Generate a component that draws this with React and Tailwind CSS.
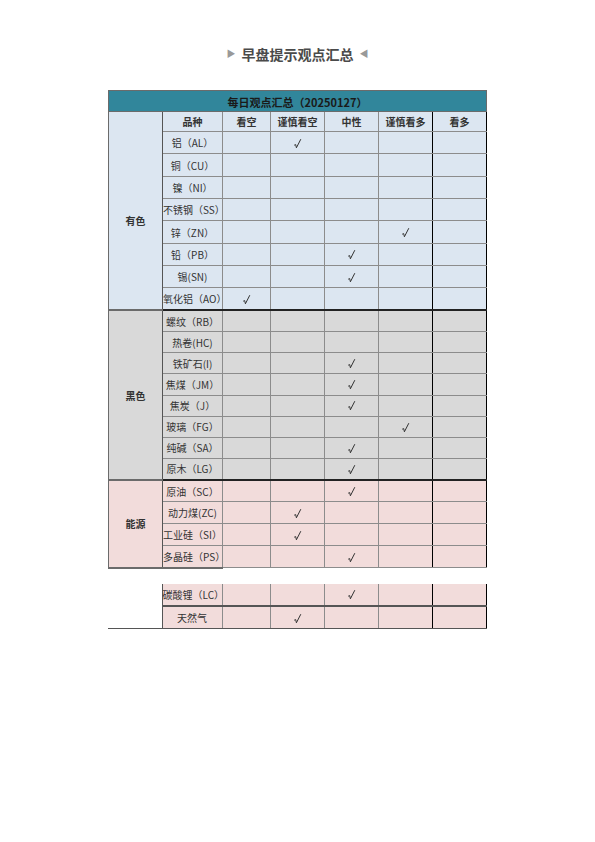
import React from "react";

const cols = ["看空", "谨慎看空", "中性", "谨慎看多", "看多"];

const groups = [
  {
    name: "有色",
    bg: "bg-[#dce6f1]",
    h: "h-[22.35px]",
    rows: [
      ["铝（AL）", 1],
      ["铜（CU）", -1],
      ["镍（NI）", -1],
      ["不锈钢（SS）", -1],
      ["锌（ZN）", 3],
      ["铅（PB）", 2],
      ["锡(SN)", 2],
      ["氧化铝（AO）", 0],
    ],
  },
  {
    name: "黑色",
    bg: "bg-[#d9d9d9]",
    h: "h-[21.2px]",
    rows: [
      ["螺纹（RB）", -1],
      ["热卷(HC)", -1],
      ["铁矿石(I)", 2],
      ["焦煤（JM）", 2],
      ["焦炭（J）", 2],
      ["玻璃（FG）", 3],
      ["纯碱（SA）", 2],
      ["原木（LG）", 2],
    ],
  },
  {
    name: "能源",
    bg: "bg-[#f2dcdb]",
    h: "h-[22px]",
    rows: [
      ["原油（SC）", 2],
      ["动力煤(ZC)", 1],
      ["工业硅（SI）", 1],
      ["多晶硅（PS）", 2],
    ],
  },
];

const extra = [
  ["碳酸锂（LC）", 2],
  ["天然气", 1],
];

const colBorder = [
  "border-r-[#8c8c8c]",
  "border-r-[#8c8c8c]",
  "border-r-[#8c8c8c]",
  "border-r-black",
  "border-r-black",
];

// the "√" mark drawn as a small tick
const Tick = () => (
  <svg width="9" height="11" viewBox="0 0 9 11" className="inline-block align-middle">
    <path d="M1.2 7.2 L2.7 6.6 L3.4 9.8 L7.8 1.2" fill="none" stroke="#333" strokeWidth="1" strokeLinejoin="round" />
  </svg>
);

const ValueCells = ({ pick }) =>
  cols.map((c, i) => (
    <td
      key={c}
      className={`border-b border-b-[#8c8c8c] border-r ${colBorder[i]} text-center leading-none`}
    >
      {pick === i ? <Tick /> : null}
    </td>
  ));

export default function App() {
  return (
    <div
      className="w-[595px] h-[842px] bg-white text-[#333]"
      style={{ fontFamily: '"Noto Sans CJK SC", "Liberation Sans", sans-serif' }}
    >
      <div className="pt-[44px] flex items-center justify-center gap-[6px] text-[#4a4a4a]">
        <span className="text-[9px] text-[#999]">▶</span>
        <span className="text-[14px] font-bold leading-[20px]">早盘提示观点汇总</span>
        <span className="text-[9px] text-[#999]">◀</span>
      </div>

      <div className="ml-[108px] mt-[26px] w-[378px]">
        <table className="w-[378px] table-fixed border-collapse text-[10px]">
          <colgroup>
            <col className="w-[54px]" />
            <col className="w-[60px]" />
            <col className="w-[48px]" />
            <col className="w-[54px]" />
            <col className="w-[54px]" />
            <col className="w-[54px]" />
            <col className="w-[54px]" />
          </colgroup>
          <tbody>
            <tr className="h-[21px] bg-[#31869b]">
              <td
                colSpan={7}
                className="border border-[#6b6b6b] pt-[2px] text-center text-[11px] font-bold text-[#1a1a1a]"
              >
                每日观点汇总（20250127）
              </td>
            </tr>
            <tr className="h-[20px] bg-[#dce6f1]">
              <td className="border-l border-l-[#6b6b6b] border-r border-r-[#555]" />
              <td className="border-b border-b-[#8c8c8c] border-r border-r-[#8c8c8c] text-center font-bold">
                品种
              </td>
              {cols.map((c, i) => (
                <td
                  key={c}
                  className={`border-b border-b-[#8c8c8c] border-r ${colBorder[i]} text-center font-bold`}
                >
                  {c}
                </td>
              ))}
            </tr>
            {groups.map((g, gi) =>
              g.rows.map(([name, pick], ri) => (
                <tr
                  key={name}
                  className={`${g.h} ${g.bg} ${
                    ri === 0 && gi > 0 ? "border-t-2 border-t-[#222]" : ""
                  }`}
                >
                  {ri === 0 && (
                    <td
                      rowSpan={g.rows.length}
                      className="border-l border-l-[#6b6b6b] border-r border-r-[#555] border-b-2 border-b-[#6b6b6b] text-center font-bold"
                    >
                      {g.name}
                    </td>
                  )}
                  <td
                    className={`border-r border-r-[#8c8c8c] text-center ${
                      ri === g.rows.length - 1 && gi === 2
                        ? "border-b-2 border-b-[#6b6b6b]"
                        : "border-b border-b-[#8c8c8c]"
                    }`}
                  >
                    {name}
                  </td>
                  <ValueCells pick={pick} />
                </tr>
              ))
            )}
          </tbody>
        </table>

        <table className="mt-[15px] w-[378px] table-fixed border-collapse text-[10px]">
          <colgroup>
            <col className="w-[54px]" />
            <col className="w-[60px]" />
            <col className="w-[48px]" />
            <col className="w-[54px]" />
            <col className="w-[54px]" />
            <col className="w-[54px]" />
            <col className="w-[54px]" />
          </colgroup>
          <tbody>
            {extra.map(([name, pick], ri) => (
              <tr key={name} className="h-[22.5px]">
                <td
                  className={`bg-white border-r border-r-[#555] ${
                    ri === 1 ? "border-b border-b-[#555]" : ""
                  }`}
                />
                <td
                  className={`bg-[#f2dcdb] border-r border-r-[#8c8c8c] text-center ${
                    ri === 1 ? "border-b border-b-[#555]" : "border-b-2 border-b-[#555]"
                  }`}
                >
                  {name}
                </td>
                {cols.map((c, i) => (
                  <td
                    key={c}
                    className={`bg-[#f2dcdb] border-r ${colBorder[i]} text-center leading-none ${
                      ri === 1 ? "border-b border-b-[#555]" : "border-b-2 border-b-[#555]"
                    }`}
                  >
                    {pick === i ? <Tick /> : null}
                  </td>
                ))}
              </tr>
            ))}
          </tbody>
        </table>
      </div>
    </div>
  );
}
